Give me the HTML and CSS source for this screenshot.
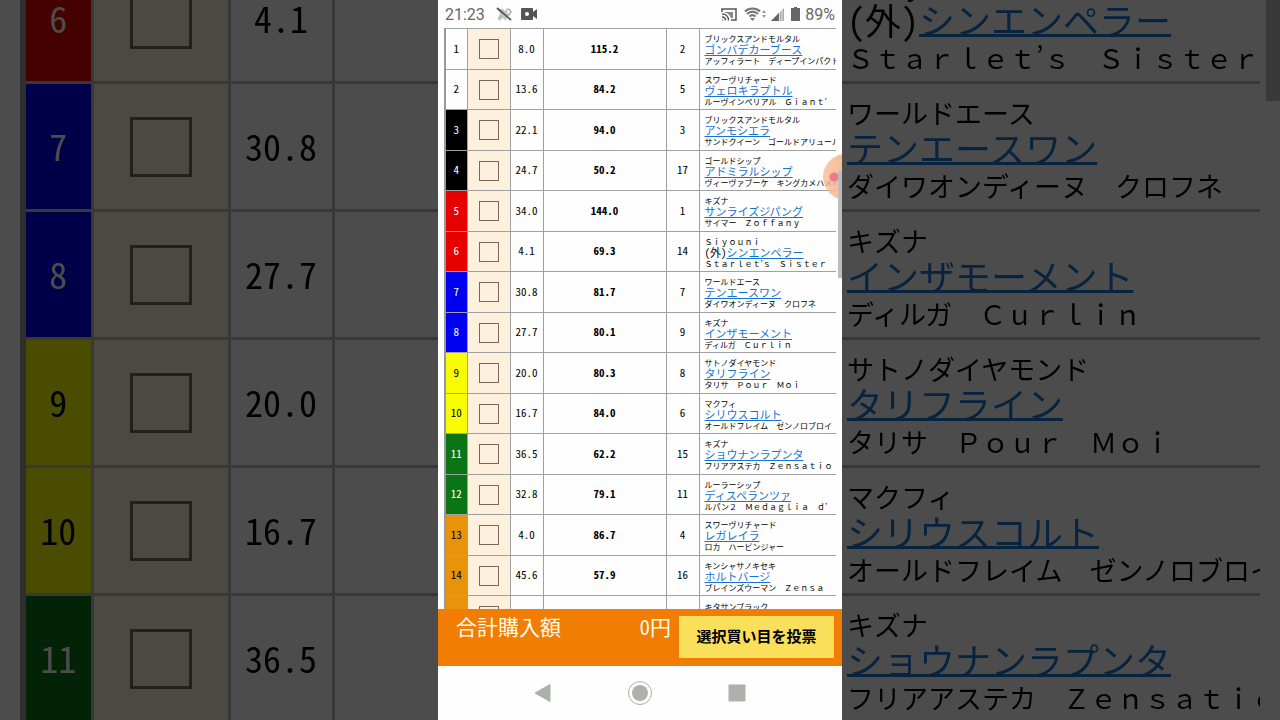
FILE: index.html
```html
<!DOCTYPE html>
<html lang="ja">
<head>
    <meta charset="UTF-8">
    <meta name="viewport" content="width=device-width, initial-scale=1.0">
    <title>選択買い目</title>
    <link rel="stylesheet" href="styles.css">
</head>
<body>

    <!-- enlarged left half of the table -->
    <div class="backdrop backdrop-left" aria-hidden="true">
        <table class="horses large">
            <colgroup><col class="c-num"><col class="c-check"><col class="c-odds"><col></colgroup>
            <tr><td class="num red">6</td><td class="check"><input type="checkbox" tabindex="-1" aria-label="6番"></td><td>4.1</td><td></td></tr>
            <tr><td class="num blue">7</td><td class="check"><input type="checkbox" tabindex="-1" aria-label="7番"></td><td>30.8</td><td></td></tr>
            <tr><td class="num blue">8</td><td class="check"><input type="checkbox" tabindex="-1" aria-label="8番"></td><td>27.7</td><td></td></tr>
            <tr><td class="num yellow">9</td><td class="check"><input type="checkbox" tabindex="-1" aria-label="9番"></td><td>20.0</td><td></td></tr>
            <tr><td class="num yellow">10</td><td class="check"><input type="checkbox" tabindex="-1" aria-label="10番"></td><td>16.7</td><td></td></tr>
            <tr><td class="num green">11</td><td class="check"><input type="checkbox" tabindex="-1" aria-label="11番"></td><td>36.5</td><td></td></tr>
        </table>
    </div>

    <main class="phone">
        <header class="status">
            <span class="clock">21:23</span>
            <svg class="icon" width="17" height="16" viewBox="0 0 17 16">
                <path d="M2 3h5l2 2 2-3 3 1 2 3-3 4-2 1-1 4-3-3-4 3-1-4 2-3z" fill="#c4c6c4"/>
                <path d="M1 2l14 12" stroke="#555" stroke-width="1.800"/>
                <path d="M2 13l4-3" fill="none" stroke="#aaa"/>
                <path d="M12 3l3 2-2 4-2-1" fill="#fff" stroke="#999"/>
            </svg>
            <svg class="icon" width="18" height="14" viewBox="0 0 18 14">
                <path d="M2 1h10a1 1 0 0 1 1 1v3l4-3v10l-4-3v3a1 1 0 0 1-1 1H2a1 1 0 0 1-1-1V2a1 1 0 0 1 1-1z" fill="#555"/>
                <circle cx="7" cy="7" r="2" fill="#fff"/>
            </svg>
            <span class="spacer"></span>
            <svg class="icon" width="16" height="13" viewBox="0 0 16 13">
                <path d="M1 4V1h14v11h-5" fill="none" stroke="#555" stroke-width="1.500"/>
                <path d="M4 4h8v6h-2C9 7 7 5 4 5z" fill="#888"/>
                <path d="M1 6c4 0 6.500 2.500 6.500 6.500M1 9c2 0 3.500 1.500 3.500 3.500" fill="none" stroke="#555" stroke-width="1.400"/>
                <path d="M1 11v1.500h1.500z" fill="#555"/>
            </svg>
            <svg class="icon wifi" width="24" height="15" viewBox="0 0 24 15">
                <path d="M1 4.500C5 .5 12 .5 16 4.500M3 7c3.500-3 7.500-3 11 0M5.500 9.500c2-1.700 4-1.700 6 0" fill="none" stroke="#777" stroke-width="2.200"/>
                <path d="M6 11h5l-2.500 3z" fill="#777"/>
                <path d="M18 6l2-3 2 3zM18 8l2 3 2-3z" fill="#999"/>
            </svg>
            <svg class="icon" width="13" height="13" viewBox="0 0 13 13">
                <path d="M0 13L13 0v13z" fill="#aaa"/>
                <path d="M0 13l8-8v8z" fill="#666"/>
                <path d="M8.500 0v13M11 0v13" stroke="#fff" stroke-width="0.700"/>
            </svg>
            <svg class="icon battery" width="9" height="14" viewBox="0 0 9 14">
                <path d="M3 0h3v1h3v13H0V1h3z" fill="#666"/>
            </svg>
            <span class="percent">89%</span>
        </header>

        <section class="list">
            <table class="horses">
                <colgroup><col class="c-num"><col class="c-check"><col class="c-odds"><col class="c-rate"><col class="c-rank"><col></colgroup>
                <tr><td class="num">1</td><td class="check"><input type="checkbox" aria-label="1番"></td><td>8.0</td><td class="rate">115.2</td><td>2</td><td class="name"><p>ブリックスアンドモルタル</p><a href="#">ゴンバデカーブース</a><p>アッフィラート　ディープインパクト</p></td></tr>
                <tr><td class="num">2</td><td class="check"><input type="checkbox" aria-label="2番"></td><td>13.6</td><td class="rate">84.2</td><td>5</td><td class="name"><p>スワーヴリチャード</p><a href="#">ヴェロキラプトル</a><p>ルーヴインペリアル　Ｇｉａｎｔ<span class="half">’</span></p></td></tr>
                <tr><td class="num black">3</td><td class="check"><input type="checkbox" aria-label="3番"></td><td>22.1</td><td class="rate">94.0</td><td>3</td><td class="name"><p>ブリックスアンドモルタル</p><a href="#">アンモシエラ</a><p>サンドクイーン　ゴールドアリュール</p></td></tr>
                <tr><td class="num black">4</td><td class="check"><input type="checkbox" aria-label="4番"></td><td>24.7</td><td class="rate">50.2</td><td>17</td><td class="name"><p>ゴールドシップ</p><a href="#">アドミラルシップ</a><p>ヴィーヴァブーケ　キングカメハメハ</p></td></tr>
                <tr><td class="num red">5</td><td class="check"><input type="checkbox" aria-label="5番"></td><td>34.0</td><td class="rate">144.0</td><td>1</td><td class="name"><p>キズナ</p><a href="#">サンライズジパング</a><p>サイマー　Ｚｏｆｆａｎｙ</p></td></tr>
                <tr><td class="num red">6</td><td class="check"><input type="checkbox" aria-label="6番"></td><td>4.1</td><td class="rate">69.3</td><td>14</td><td class="name"><p>Ｓｉｙｏｕｎｉ</p>(外)<a href="#">シンエンペラー</a><p>Ｓｔａｒｌｅｔ<span class="half">’</span>ｓ　Ｓｉｓｔｅｒ</p></td></tr>
                <tr><td class="num blue">7</td><td class="check"><input type="checkbox" aria-label="7番"></td><td>30.8</td><td class="rate">81.7</td><td>7</td><td class="name"><p>ワールドエース</p><a href="#">テンエースワン</a><p>ダイワオンディーヌ　クロフネ</p></td></tr>
                <tr><td class="num blue">8</td><td class="check"><input type="checkbox" aria-label="8番"></td><td>27.7</td><td class="rate">80.1</td><td>9</td><td class="name"><p>キズナ</p><a href="#">インザモーメント</a><p>ディルガ　Ｃｕｒｌｉｎ</p></td></tr>
                <tr><td class="num yellow">9</td><td class="check"><input type="checkbox" aria-label="9番"></td><td>20.0</td><td class="rate">80.3</td><td>8</td><td class="name"><p>サトノダイヤモンド</p><a href="#">タリフライン</a><p>タリサ　Ｐｏｕｒ　Ｍｏｉ</p></td></tr>
                <tr><td class="num yellow">10</td><td class="check"><input type="checkbox" aria-label="10番"></td><td>16.7</td><td class="rate">84.0</td><td>6</td><td class="name"><p>マクフィ</p><a href="#">シリウスコルト</a><p>オールドフレイム　ゼンノロブロイ</p></td></tr>
                <tr><td class="num green">11</td><td class="check"><input type="checkbox" aria-label="11番"></td><td>36.5</td><td class="rate">62.2</td><td>15</td><td class="name"><p>キズナ</p><a href="#">ショウナンラプンタ</a><p>フリアアステカ　Ｚｅｎｓａｔｉｏ</p></td></tr>
                <tr><td class="num green">12</td><td class="check"><input type="checkbox" aria-label="12番"></td><td>32.8</td><td class="rate">79.1</td><td>11</td><td class="name"><p>ルーラーシップ</p><a href="#">ディスペランツァ</a><p>ルパン２　Ｍｅｄａｇｌｉａ　ｄ<span class="half">’</span></p></td></tr>
                <tr><td class="num orange">13</td><td class="check"><input type="checkbox" aria-label="13番"></td><td>4.0</td><td class="rate">86.7</td><td>4</td><td class="name"><p>スワーヴリチャード</p><a href="#">レガレイラ</a><p>ロカ　ハービンジャー</p></td></tr>
                <tr><td class="num orange">14</td><td class="check"><input type="checkbox" aria-label="14番"></td><td>45.6</td><td class="rate">57.9</td><td>16</td><td class="name"><p>キンシャサノキセキ</p><a href="#">ホルトバージ</a><p>ブレインズウーマン　Ｚｅｎｓａ</p></td></tr>
                <tr><td class="num orange"></td><td class="check"><input type="checkbox" aria-label="15番"></td><td></td><td></td><td></td><td class="name"><p>キタサンブラック</p></td></tr>
            </table>
            <span class="bubble"></span>
            <span class="scrollbar"></span>
        </section>

        <footer class="total">
            <span class="total-label">合計購入額</span>
            <span class="amount">0円</span>
            <button class="vote" type="button">選択買い目を投票</button>
        </footer>

        <nav class="keys">
            <button type="button" aria-label="戻る"><svg width="26" height="26" viewBox="0 0 26 26"><path d="M5 13L20 4.500v17z" fill="#adb0ad" stroke="#adb0ad" stroke-linejoin="round"/></svg></button>
            <button type="button" aria-label="ホーム"><svg width="26" height="26" viewBox="0 0 26 26"><circle cx="13" cy="13" r="11.500" fill="none" stroke="#adb0ad"/><circle cx="13" cy="13" r="8" fill="#adb0ad"/></svg></button>
            <button type="button" aria-label="履歴"><svg width="26" height="26" viewBox="0 0 26 26"><rect x="4.500" y="4.500" width="17" height="17" rx="1" fill="#adb0ad"/></svg></button>
        </nav>
    </main>

    <!-- enlarged right half of the table -->
    <div class="backdrop backdrop-right" aria-hidden="true">
        <table class="horses large names">
            <tr><td class="name"><p>Ｓｉｙｏｕｎｉ</p>(外)<a href="#" tabindex="-1">シンエンペラー</a><p>Ｓｔａｒｌｅｔ<span class="half">’</span>ｓ　Ｓｉｓｔｅｒ</p></td></tr>
            <tr><td class="name"><p>ワールドエース</p><a href="#" tabindex="-1">テンエースワン</a><p>ダイワオンディーヌ　クロフネ</p></td></tr>
            <tr><td class="name"><p>キズナ</p><a href="#" tabindex="-1">インザモーメント</a><p>ディルガ　Ｃｕｒｌｉｎ</p></td></tr>
            <tr><td class="name"><p>サトノダイヤモンド</p><a href="#" tabindex="-1">タリフライン</a><p>タリサ　Ｐｏｕｒ　Ｍｏｉ</p></td></tr>
            <tr><td class="name"><p>マクフィ</p><a href="#" tabindex="-1">シリウスコルト</a><p>オールドフレイム　ゼンノロブロイ</p></td></tr>
            <tr><td class="name"><p>キズナ</p><a href="#" tabindex="-1">ショウナンラプンタ</a><p>フリアアステカ　Ｚｅｎｓａｔｉｏ</p></td></tr>
        </table>
        <span class="scrollbar"></span>
    </div>

</body>
</html>
```
FILE: styles.css
```css
* {
    box-sizing: border-box;
}

body {
    display: grid;
    grid-template-columns: 1fr minmax(0, 404px) 1fr;
    height: 100vh;
    margin: 0;
    overflow: hidden;
    background-color: #4c4c4c;
    color: #000;
    font-family: "Noto Sans CJK JP", sans-serif;
    font-feature-settings: "hwid" 1;
}

button {
    border: none;
    cursor: pointer;
    font-family: inherit;
}

/* phone */
.phone {
    display: flex;
    flex-direction: column;
    height: 100vh;
    background-color: #fdfefd;
}

.status {
    display: flex;
    align-items: center;
    gap: 7px;
    flex: none;
    height: 28px;
    padding: 0 7px;
    color: #666;
    font-family: Roboto, sans-serif;
    font-size: 16px;
}

.clock {
    margin-right: 4px;
}

.spacer {
    flex: 1;
}

.icon {
    flex: none;
}

.wifi {
    margin-right: -4px;
}

.battery {
    margin-right: -2px;
}

.list {
    position: relative;
    flex: 1;
    min-height: 0;
    padding: 0 6px;
    overflow: hidden;
}

/* table */
.horses {
    width: 100%;
    table-layout: fixed;
    border-collapse: collapse;
    border-left: 2px solid #999;
    font-size: 11px;
    line-height: 11px;
    text-align: center;
}

.horses tr {
    height: 40px;
}

.horses tr:nth-child(odd) {
    height: 41px;
}

.horses td {
    padding: 0 0 2px;
    border: 1px solid #a0a0a0;
    border-right: none;
}

.c-num {
    width: 22px;
}

.c-check {
    width: 43px;
}

.c-odds,
.c-rank {
    width: 33px;
}

.c-rate {
    width: 123px;
}

.horses .check {
    padding: 0;
    background-color: #fdf0dc;
}

.check input {
    display: block;
    width: 20px;
    height: 20px;
    margin: 0 auto;
    appearance: none;
    border: 1px solid #74695c;
}

.rate {
    font-weight: bold;
}

.horses .name {
    padding: 5px 0 0 5px;
    overflow: hidden;
    text-align: left;
    vertical-align: top;
    white-space: nowrap;
}

.name p {
    margin: 0;
    font-size: 8px;
    line-height: 10px;
    font-feature-settings: normal;
}

.name p:last-child {
    padding-top: 1px;
}

.half {
    font-feature-settings: "hwid" 1;
}

.name a {
    color: #1673cf;
    text-underline-offset: 1px;
}

.black {
    background-color: #000;
    color: #fff;
}

.red {
    background-color: #e60000;
    color: #fff;
}

.blue {
    background-color: #0000f0;
    color: #fff;
}

.yellow {
    background-color: #f8fc05;
}

.green {
    background-color: #0b7415;
    color: #fff;
}

.orange {
    background-color: #e8930a;
}

.scrollbar {
    position: absolute;
    top: 143px;
    right: 0;
    width: 4px;
    height: 107px;
    background-color: #bdbdbd;
}

.bubble {
    position: absolute;
    top: 126px;
    right: -27px;
    width: 46px;
    height: 46px;
    border-radius: 50%;
    background: radial-gradient(circle at 11px 23px, #f0788c 4px, transparent 5px), linear-gradient(to right, rgba(248, 190, 150, 0.8), rgba(240, 150, 95, 0.8));
}

/* total bar */
.total {
    display: flex;
    align-items: flex-start;
    flex: none;
    padding: 7px 8px 8px 18px;
    background-color: #f27d05;
    color: #fffbe8;
    font-size: 21px;
    line-height: 20px;
}

.amount {
    margin-left: auto;
    margin-right: 8px;
}

.vote {
    width: 155px;
    height: 42px;
    padding: 0 0 3px;
    background-color: #fae05a;
    color: #000;
    font-size: 15px;
    font-weight: bold;
}

.keys {
    display: flex;
    justify-content: center;
    align-items: center;
    gap: 71px;
    flex: none;
    height: 54px;
}

.keys button {
    height: 26px;
    padding: 0;
    background: none;
}

/* dimmed side panels */
.backdrop {
    position: relative;
    overflow: hidden;
    background-color: #fff;
    filter: brightness(0.3);
}

.backdrop-left {
    padding-left: 20px;
}

.backdrop-right {
    padding-right: 20px;
}

.large {
    margin-top: -47px;
    border-left: 6px solid #999;
    font-size: 36px;
    line-height: 34px;
}

.large tr,
.large tr:nth-child(odd) {
    height: 128px;
}

.large td {
    padding-bottom: 4px;
    border-width: 3px;
    border-color: #b8bcb8;
}

.large .c-num {
    width: 69px;
}

.large .c-check {
    width: 137px;
}

.large .c-odds {
    width: 104px;
}

.large input {
    width: 62px;
    height: 60px;
    border: 3px solid #74695c;
}

.names,
.names td {
    border-left: none;
}

.large .name {
    padding: 12px 0 0 5px;
}

.large p {
    font-size: 27px;
    line-height: 34px;
}

.large p:last-child {
    padding-top: 5px;
}

.large a {
    text-underline-offset: -1px;
}

.backdrop .scrollbar {
    top: 0;
    width: 14px;
    height: 101px;
}
```
